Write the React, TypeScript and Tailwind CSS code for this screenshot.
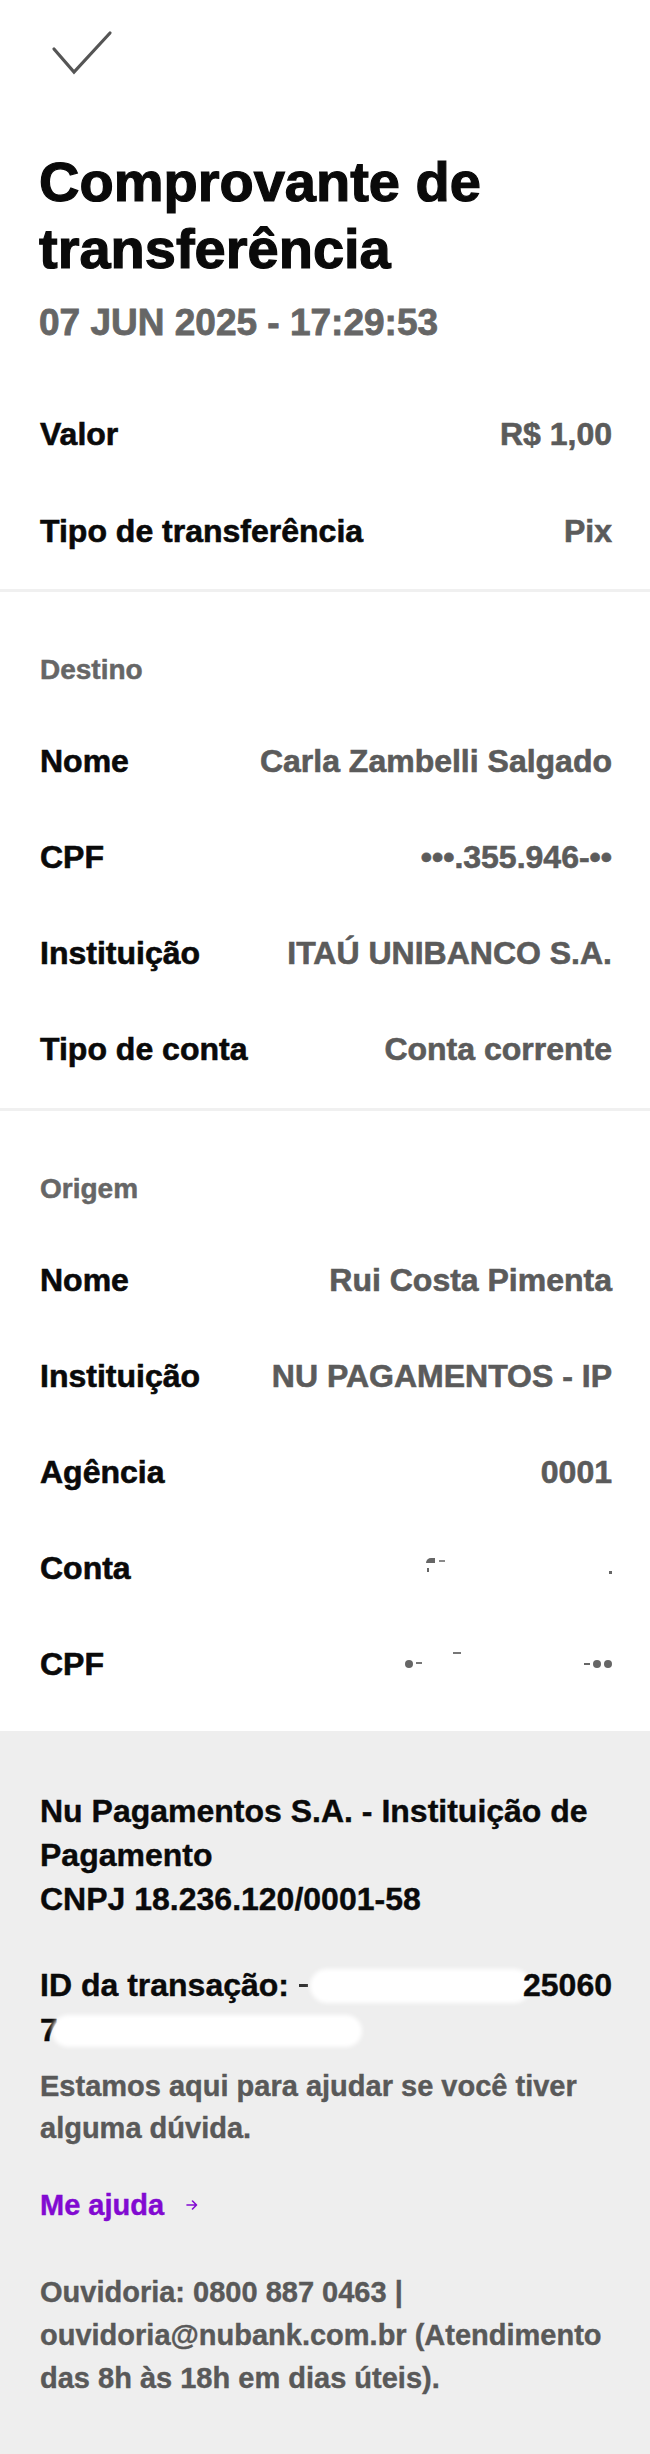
import React from "react";

const Row = ({ label, value }: { label: string; value: React.ReactNode }) => {
  return (
    <div className="flex items-center justify-between text-[32px] font-bold leading-[40px] [-webkit-text-stroke:0.6px_currentColor]">
      <span className="text-[#0a0a0a]">{label}</span>
      <span className="text-[#5b5b5b]">{value}</span>
    </div>
  );
};

const Section = ({
  title,
  children,
  last,
}: {
  title: string;
  children: React.ReactNode;
  last?: boolean;
}) => {
  return (
    <section className={`pl-10 pr-[38px] pt-[61px] ${last ? "pb-[47px]" : "pb-[39px]"}`}>
      <h2 className="text-[28px] font-bold leading-[34px] text-[#666666] [-webkit-text-stroke:0.5px_currentColor]">
        {title}
      </h2>
      <div className="mt-[54px] flex flex-col gap-[56px]">{children}</div>
    </section>
  );
};

const Divider = () => <div className="h-[3px] bg-[#f0f0f0]" />;

// traces left by the redaction on the account number
const ContaHidden = () => (
  <span className="flex h-[40px] w-[186px] items-center justify-between">
    <span className="-mt-[6px] flex flex-col gap-[5px]">
      <span className="flex items-center gap-[4px]">
        <span className="h-[5px] w-[9px] rounded-tl-full bg-[#666666]" />
        <span className="h-[2px] w-[6px] bg-[#8a8a8a]" />
      </span>
      <span className="ml-[1px] h-[4px] w-[2px] bg-[#666666]" />
    </span>
    <span className="mt-[8px] h-[3px] w-[3px] bg-[#666666]" />
  </span>
);

const CpfHidden = () => (
  <span className="flex h-[40px] w-[207px] items-center justify-between">
    <span className="flex items-center gap-[3px]">
      <span className="h-[8px] w-[8px] rounded-full bg-[#666666]" />
      <span className="-mt-[3px] h-[2px] w-[6px] bg-[#777777]" />
      <span className="ml-[28px] -mt-[22px] h-[2px] w-[8px] bg-[#777777]" />
    </span>
    <span className="flex items-center gap-[3px]">
      <span className="h-[2px] w-[6px] bg-[#666666]" />
      <span className="h-[8px] w-[8px] rounded-full bg-[#666666]" />
      <span className="h-[8px] w-[8px] rounded-full bg-[#666666]" />
    </span>
  </span>
);

export default function App() {
  return (
    <div className="min-h-[2454px] bg-white font-['Liberation_Sans',Arial,sans-serif]">
      <header className="pl-[39px] pr-[38px] pt-[30px]">
        <svg width="62" height="46" viewBox="0 0 62 46" className="ml-[12px]" fill="none">
          <path
            d="M3 19 L23 42 L59 3"
            stroke="#555555"
            strokeWidth="3.2"
            strokeLinecap="round"
            strokeLinejoin="miter"
          />
        </svg>
        <h1 className="mt-[72px] text-[56px] font-bold leading-[67px] text-[#0a0a0a] [-webkit-text-stroke:1.2px_currentColor]">
          Comprovante de
          <br />
          transferência
        </h1>
        <p className="mt-[19px] text-[37px] font-bold leading-[44px] text-[#666666] [-webkit-text-stroke:0.8px_currentColor]">
          07 JUN 2025 - 17:29:53
        </p>
      </header>

      <div className="flex flex-col gap-[57px] pl-10 pr-[38px] pb-[38px] pt-[69px]">
        <Row label="Valor" value="R$ 1,00" />
        <Row label="Tipo de transferência" value="Pix" />
      </div>
      <Divider />

      <Section title="Destino">
        <Row label="Nome" value="Carla Zambelli Salgado" />
        <Row label="CPF" value="•••.355.946-••" />
        <Row label="Instituição" value="ITAÚ UNIBANCO S.A." />
        <Row label="Tipo de conta" value="Conta corrente" />
      </Section>
      <Divider />

      <Section title="Origem" last>
        <Row label="Nome" value="Rui Costa Pimenta" />
        <Row label="Instituição" value="NU PAGAMENTOS - IP" />
        <Row label="Agência" value="0001" />
        <Row label="Conta" value={<ContaHidden />} />
        <Row label="CPF" value={<CpfHidden />} />
      </Section>

      <footer className="bg-[#eeeeee] pb-[54px] pl-10 pr-[38px] pt-[58px] [-webkit-text-stroke:0.4px_currentColor]">
        <p className="text-[32px] font-bold leading-[44px] text-[#0a0a0a]">
          Nu Pagamentos S.A. - Instituição de Pagamento
          <br />
          CNPJ 18.236.120/0001-58
        </p>

        <div className="mt-[42px] text-[32px] font-bold leading-[45px] text-[#0a0a0a]">
          <div className="flex items-center">
            <span>ID da transação:</span>
            <span className="ml-[10px] h-[3px] w-[9px] bg-[#333333]" />
            <span className="-mr-[8px] ml-[2px] h-[34px] flex-1 rounded-full bg-white blur-[2px]" />
            <span className="relative">25060</span>
          </div>
          <div className="flex items-center">
            <span>7</span>
            <span className="-ml-[6px] h-[32px] w-[310px] rounded-full bg-white blur-[2px]" />
          </div>
        </div>

        <p className="mt-[12px] text-[29px] font-bold leading-[42px] text-[#595959]">
          Estamos aqui para ajudar se você tiver
          <br />
          alguma dúvida.
        </p>

        <a className="mt-[35px] flex items-center gap-[22px] text-[29px] font-bold leading-[42px] text-[#820ad1]">
          Me ajuda
          <svg width="12" height="10" viewBox="0 0 12 10" fill="none">
            <path
              d="M1 5 H10.5 M6.5 1 L10.5 5 L6.5 9"
              stroke="#820ad1"
              strokeWidth="1.6"
              strokeLinecap="round"
              strokeLinejoin="round"
            />
          </svg>
        </a>

        <p className="mt-[45px] text-[29px] font-bold leading-[43px] text-[#595959]">
          <span className="block whitespace-nowrap">Ouvidoria: 0800 887 0463 |</span>
          <span className="block whitespace-nowrap">ouvidoria@nubank.com.br (Atendimento</span>
          <span className="block whitespace-nowrap">das 8h às 18h em dias úteis).</span>
        </p>
      </footer>
    </div>
  );
}
